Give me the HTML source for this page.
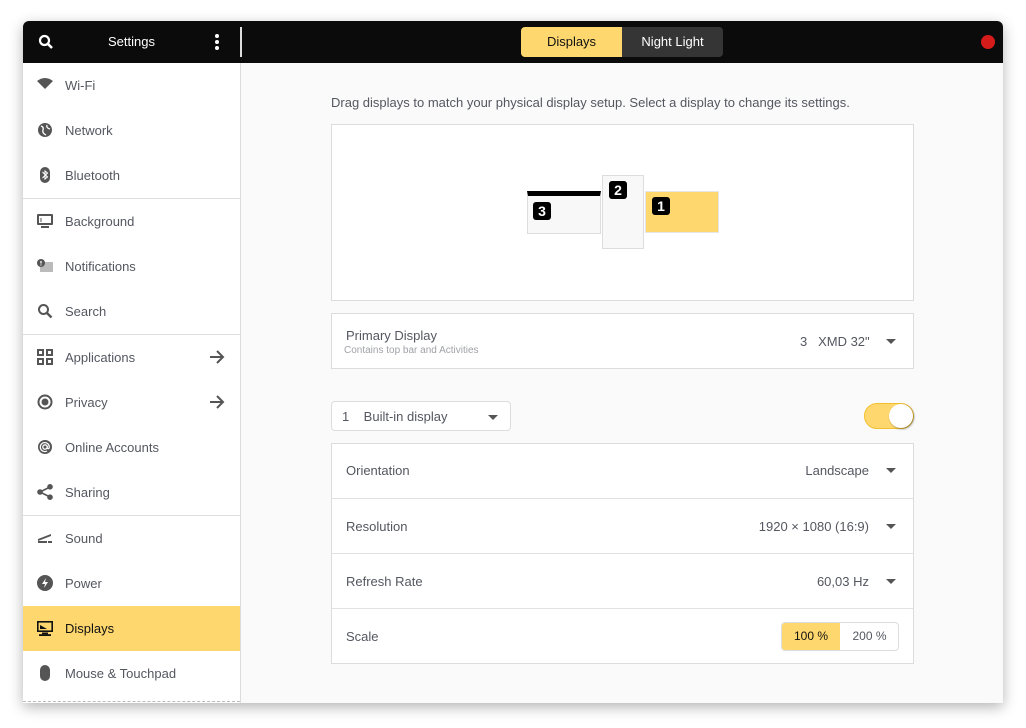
<!DOCTYPE html>
<html><head><meta charset="utf-8"><style>
*{box-sizing:border-box;margin:0;padding:0}
body{width:1026px;height:728px;background:#fff;font-family:"Liberation Sans",sans-serif;font-size:13px;color:#545760;position:relative;overflow:hidden}
.win{position:absolute;left:23px;top:21px;width:980px;height:682px;background:#fafafa;box-shadow:0 4px 14px rgba(0,0,0,.3);border-radius:6px 6px 0 0;overflow:hidden}
.hdr{position:absolute;left:0;top:0;width:980px;height:42px;background:#0b0b0b}
.side{position:absolute;left:0;top:42px;width:218px;height:640px;background:#fff;border-right:1px solid #dcdcdc}
.row{position:absolute;left:0;width:217px;height:45px;display:flex;align-items:center}
.row .ic{position:absolute;left:14px;top:14px;width:16px;height:16px}
.row span{position:absolute;left:42px;top:15px}
.sep{position:absolute;left:0;width:217px;height:1px;background:#dedede}
.sel{background:#fed86e;color:#111}
.arrow{position:absolute;left:186px;top:14px}
.box{position:absolute;background:#fff;border:1px solid #dcdcdc}
.lrow{position:absolute;left:0;width:581px;height:55px;border-top:1px solid #e2e2e2}
.lrow .l{position:absolute;left:14px;top:20px}
.lrow .r{position:absolute;right:44px;top:20px}
.tri{position:absolute;width:0;height:0;border-left:5px solid transparent;border-right:5px solid transparent;border-top:5px solid #555}
.num{position:absolute;width:18px;height:18px;background:#000;color:#fff;border-radius:3px;font-weight:bold;font-size:14px;text-align:center;line-height:18px}
</style></head><body>
<div class="win">
 <div class="hdr">
  <svg style="position:absolute;left:15px;top:13px" width="16" height="16" viewBox="0 0 16 16"><circle cx="6.5" cy="6.5" r="4.5" fill="none" stroke="#fff" stroke-width="2.2"/><path d="M10 10l4 4" stroke="#fff" stroke-width="2.6"/></svg>
  <div style="position:absolute;left:85px;top:13px;color:#fff;font-size:13px">Settings</div>
  <div style="position:absolute;left:192px;top:13px;width:4px;height:16px"><i style="position:absolute;left:0;top:0;width:4px;height:4px;border-radius:2px;background:#fff"></i><i style="position:absolute;left:0;top:6px;width:4px;height:4px;border-radius:2px;background:#fff"></i><i style="position:absolute;left:0;top:12px;width:4px;height:4px;border-radius:2px;background:#fff"></i></div>
  <div style="position:absolute;left:217px;top:6px;width:2px;height:30px;background:#ddd"></div>
  <div style="position:absolute;left:498px;top:6px;width:101px;height:30px;background:#fed86e;border-radius:4px 0 0 4px;color:#111;text-align:center;line-height:30px">Displays</div>
  <div style="position:absolute;left:599px;top:6px;width:101px;height:30px;background:#353535;border-radius:0 4px 4px 0;color:#fff;text-align:center;line-height:30px">Night Light</div>
  <div style="position:absolute;left:958px;top:14px;width:14px;height:14px;border-radius:7px;background:#d61b1b"></div>
 </div>
 <div class="side">
  <div class="row" style="top:0"><svg class="ic" viewBox="0 0 16 16"><path d="M0 4Q8-2 16 4L8 12Z" fill="#555"/></svg><span>Wi-Fi</span></div>
  <div class="row" style="top:45px"><svg class="ic" viewBox="0 0 16 16"><circle cx="8" cy="8" r="7" fill="#555"/><path d="M4 4q3 1 2 4t3 5M10 3q-1 3 3 4" stroke="#fff" stroke-width="1.3" fill="none"/></svg><span>Network</span></div>
  <div class="row" style="top:90px"><svg class="ic" viewBox="0 0 16 16"><rect x="3" y="0" width="10" height="16" rx="5" fill="#555"/><path d="M5.5 5l5 5-2.5 2V4l2.5 2-5 5" stroke="#fff" stroke-width="1.1" fill="none"/></svg><span>Bluetooth</span></div>
  <div class="sep" style="top:135px"></div>
  <div class="row" style="top:136px"><svg class="ic" viewBox="0 0 16 16"><rect x="0" y="1" width="16" height="11" rx="1" fill="#555"/><rect x="2" y="3" width="12" height="7" fill="#fff"/><path d="M4 9V5" stroke="#555"/><rect x="4" y="13" width="8" height="2" fill="#555"/></svg><span>Background</span></div>
  <div class="row" style="top:181px"><svg class="ic" viewBox="0 0 16 16"><rect x="3" y="4" width="13" height="10" fill="#bbb"/><circle cx="4" cy="5" r="4" fill="#555"/><path d="M4 3v2.5M4 6.5v1" stroke="#fff" stroke-width="1.3"/></svg><span>Notifications</span></div>
  <div class="row" style="top:226px"><svg class="ic" viewBox="0 0 16 16"><circle cx="6.5" cy="6.5" r="4.5" fill="none" stroke="#555" stroke-width="2"/><path d="M10 10l4.5 4.5" stroke="#555" stroke-width="2.4"/></svg><span>Search</span></div>
  <div class="sep" style="top:271px"></div>
  <div class="row" style="top:272px"><svg class="ic" viewBox="0 0 16 16" fill="none" stroke="#555" stroke-width="2"><rect x="1" y="1" width="5" height="5"/><rect x="10" y="1" width="5" height="5"/><rect x="1" y="10" width="5" height="5"/><rect x="10" y="10" width="5" height="5"/></svg><span>Applications</span><svg class="arrow" width="16" height="16" viewBox="0 0 16 16"><path d="M1 8h13M8 2l6 6-6 6" stroke="#555" stroke-width="2" fill="none"/></svg></div>
  <div class="row" style="top:317px"><svg class="ic" viewBox="0 0 16 16"><circle cx="8" cy="8" r="6.5" fill="none" stroke="#555" stroke-width="2"/><circle cx="8" cy="8" r="3.5" fill="#555"/></svg><span>Privacy</span><svg class="arrow" width="16" height="16" viewBox="0 0 16 16"><path d="M1 8h13M8 2l6 6-6 6" stroke="#555" stroke-width="2" fill="none"/></svg></div>
  <div class="row" style="top:362px"><svg class="ic" viewBox="0 0 16 16"><circle cx="8" cy="8" r="7" fill="#555"/><circle cx="8" cy="8" r="2.2" fill="none" stroke="#fff" stroke-width="1.3"/><path d="M10.2 7v2q1 1.5 2 0A4.5 4.5 0 1 0 10 12" stroke="#fff" stroke-width="1.2" fill="none"/></svg><span>Online Accounts</span></div>
  <div class="row" style="top:407px"><svg class="ic" viewBox="0 0 16 16"><circle cx="3" cy="8" r="2.8" fill="#555"/><circle cx="13" cy="2.8" r="2.8" fill="#555"/><circle cx="13" cy="13.2" r="2.8" fill="#555"/><path d="M3 8L13 3M3 8l10 5" stroke="#555" stroke-width="1.6"/></svg><span>Sharing</span></div>
  <div class="sep" style="top:452px"></div>
  <div class="row" style="top:453px"><svg class="ic" viewBox="0 0 16 16"><path d="M1 11L14 6v-2L1 9z" fill="#555"/><rect x="1" y="11" width="9" height="2" fill="#555"/><rect x="11" y="11" width="4" height="2" fill="#555"/></svg><span>Sound</span></div>
  <div class="row" style="top:498px"><svg class="ic" viewBox="0 0 16 16"><circle cx="8" cy="8" r="8" fill="#555"/><path d="M9 3L5 9h3l-1 4 4-6H8z" fill="#fff"/></svg><span>Power</span></div>
  <div class="row sel" style="top:543px"><svg class="ic" viewBox="0 0 16 16"><rect x="0.8" y="1.8" width="14.4" height="9.4" fill="none" stroke="#111" stroke-width="1.6"/><path d="M3 5v4h7z" fill="#111"/><rect x="5" y="12.5" width="6" height="1.8" fill="#111"/><rect x="2" y="14.2" width="12" height="1.8" fill="#111"/></svg><span>Displays</span></div>
  <div class="row" style="top:588px"><svg class="ic" viewBox="0 0 16 16"><rect x="3" y="0" width="10" height="16" rx="5" fill="#555"/></svg><span>Mouse &amp; Touchpad</span></div>
  <div style="position:absolute;left:0;top:638px;width:217px;border-top:1px dashed #bbb"></div>
 </div>
 <div style="position:absolute;left:308px;top:74px;font-size:13px;color:#545760">Drag displays to match your physical display setup. Select a display to change its settings.</div>
 <div class="box" style="left:308px;top:103px;width:583px;height:177px">
  <div style="position:absolute;left:195px;top:66px;width:74px;height:43px;background:#f8f8f8;border:1px solid #ddd;border-top:5px solid #000"></div>
  <div class="num" style="left:201px;top:77px">3</div>
  <div style="position:absolute;left:270px;top:50px;width:42px;height:74px;background:#f8f8f8;border:1px solid #ddd"></div>
  <div class="num" style="left:277px;top:56px">2</div>
  <div style="position:absolute;left:313px;top:66px;width:74px;height:42px;background:#fed86e;border:1px solid #e6e6e6"></div>
  <div class="num" style="left:320px;top:72px">1</div>
 </div>
 <div class="box" style="left:308px;top:292px;width:583px;height:56px">
  <div style="position:absolute;left:14px;top:14px">Primary Display</div>
  <div style="position:absolute;left:12px;top:31px;font-size:10px;color:#a0a2a8">Contains top bar and Activities</div>
  <div style="position:absolute;left:468px;top:20px">3&nbsp;&nbsp;&nbsp;XMD 32"</div>
  <div class="tri" style="left:554px;top:25px"></div>
 </div>
 <div class="box" style="left:308px;top:380px;width:180px;height:30px;border-radius:4px">
  <div style="position:absolute;left:10px;top:7px">1&nbsp;&nbsp;&nbsp;&nbsp;Built-in display</div>
  <div class="tri" style="left:156px;top:13px"></div>
 </div>
 <div style="position:absolute;left:841px;top:382px;width:50px;height:26px;border-radius:13px;background:#fed86e;border:1px solid #f2bf2e">
  <div style="position:absolute;right:0;top:0;width:24px;height:24px;border-radius:12px;background:#fff;box-shadow:1px 1px 2px rgba(0,0,0,.4)"></div>
 </div>
 <div class="box" style="left:308px;top:422px;width:583px;height:221px">
  <div class="lrow" style="top:-1px;border-top:none"><div class="l">Orientation</div><div class="r">Landscape</div><div class="tri" style="left:554px;top:25px"></div></div>
  <div class="lrow" style="top:54px"><div class="l">Resolution</div><div class="r">1920 × 1080 (16:9)</div><div class="tri" style="left:554px;top:25px"></div></div>
  <div class="lrow" style="top:109px"><div class="l">Refresh Rate</div><div class="r">60,03 Hz</div><div class="tri" style="left:554px;top:25px"></div></div>
  <div class="lrow" style="top:164px"><div class="l">Scale</div>
   <div style="position:absolute;left:449px;top:13px;width:118px;height:29px;border:1px solid #ddd;border-radius:4px;overflow:hidden">
    <div style="position:absolute;left:0;top:0;width:58px;height:29px;background:#fed86e;color:#111;text-align:center;line-height:27px;font-size:12px">100 %</div>
    <div style="position:absolute;left:58px;top:0;width:59px;height:29px;text-align:center;line-height:27px;font-size:12px">200 %</div>
   </div></div>
 </div>
</div>
</body></html>
